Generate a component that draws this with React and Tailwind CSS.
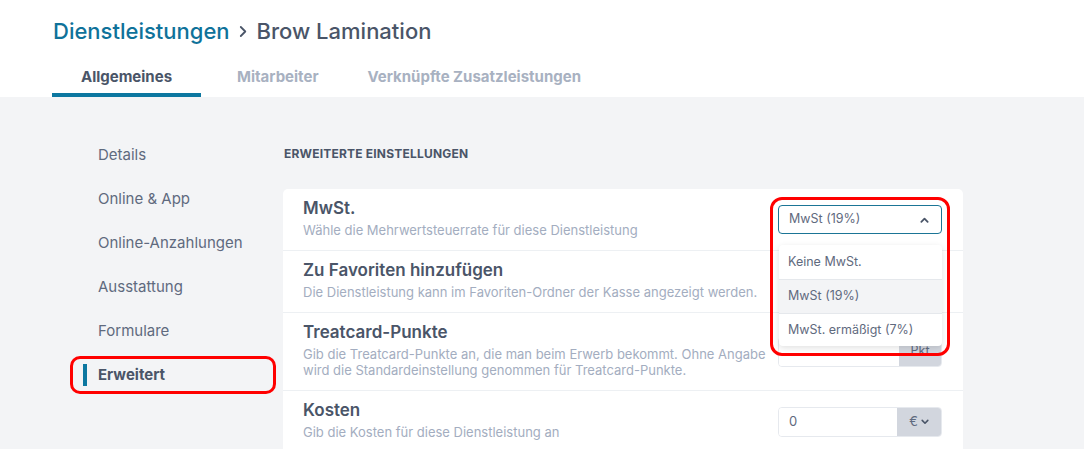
import React from "react";

const navItems = ["Details", "Online & App", "Online-Anzahlungen", "Ausstattung", "Formulare"];

function ChevronUp({ className }) {
  return (
    <svg viewBox="0 0 10 6" className={className} fill="none" stroke="currentColor" strokeWidth="2" strokeLinecap="round" strokeLinejoin="round">
      <polyline points="1.5,5 5,1.5 8.5,5" />
    </svg>
  );
}
function ChevronDown({ className }) {
  return (
    <svg viewBox="0 0 10 6" className={className} fill="none" stroke="currentColor" strokeWidth="2" strokeLinecap="round" strokeLinejoin="round">
      <polyline points="1.5,1 5,4.5 8.5,1" />
    </svg>
  );
}

function Row({ title, desc, children, border = true }) {
  return (
    <div className={`flex items-center justify-between pl-[20px] pr-[21px] ${border ? "border-t border-[#edf0f3]" : ""}`}>
      <div className="pt-[9px] pb-[12px] w-[470px] whitespace-nowrap">
        <div className="text-[17px] leading-[20px] font-semibold text-[#4a5568]">{title}</div>
        <div className="mt-[4px] text-[13px] leading-[16px] text-[#a3adc0]">{desc}</div>
      </div>
      {children}
    </div>
  );
}

export default function App() {
  return (
    <div className="w-[1084px] h-[449px] overflow-hidden bg-[#f3f4f6] font-['Inter',sans-serif]">
      <header className="bg-white h-[97px] pl-[53px] pt-[18px]">
        <h1 className="text-[22px] leading-[26px] font-medium flex items-center">
          <span className="text-[#0f729a]">Dienstleistungen</span>
          <svg viewBox="0 0 10 14" className="w-[9px] h-[13px] mx-[9px] text-[#4a5568]" fill="none" stroke="currentColor" strokeWidth="2" strokeLinecap="round" strokeLinejoin="round">
            <polyline points="2,2 7,7 2,12" />
          </svg>
          <span className="text-[#4a5568]">Brow Lamination</span>
        </h1>
        <nav className="flex mt-[13px] -ml-[1px] text-[15px] font-bold">
          <div className="w-[149px] h-[40px] pt-[4px] flex items-center justify-center text-[#4a5568] border-b-[4px] border-[#0c77a0]">Allgemeines</div>
          <div className="ml-[36px] h-[40px] pt-[4px] pb-[4px] flex items-center text-[#a8b1c1]">Mitarbeiter</div>
          <div className="ml-[49px] h-[40px] pt-[4px] pb-[4px] flex items-center text-[#a8b1c1]">Verknüpfte Zusatzleistungen</div>
        </nav>
      </header>
      <div className="flex">
        <aside className="w-[283px] shrink-0 pl-[70px] pt-[36px]">
          {navItems.map((n) => (
            <div key={n} className="h-[44px] flex items-center pl-[28px] text-[15px] text-[#5f6a7e] whitespace-nowrap">{n}</div>
          ))}
          <div className="h-[44px] py-[3px]">
            <div className="relative h-[38px] w-[206px] border-[3px] border-[#ff0000] rounded-[10px] flex items-center pl-[25px] text-[15px] font-bold text-[#4a5568]">
              <span className="absolute left-[10px] top-[5px] w-[4px] h-[22px] bg-[#0c77a0]" />
              Erweitert
            </div>
          </div>
        </aside>
        <main className="w-[680px] shrink-0 pt-[49px]">
          <div className="pl-[1px] text-[12px] leading-[16px] font-bold tracking-[0.2px] text-[#4a5568]">ERWEITERTE EINSTELLUNGEN</div>
          <div className="mt-[27px] bg-white rounded-t-[5px] h-[300px]">
            <Row title="MwSt." desc="Wähle die Mehrwertsteuerrate für diese Dienstleistung" border={false}>
              <div className="relative">
                <div className="w-[164px] h-[29px] border border-[#1b7596] rounded-[4px] flex items-center justify-between pl-[10px] pr-[12px] text-[12.5px] text-[#5f6a7e]">
                  <span>MwSt (19%)</span>
                  <ChevronUp className="w-[9px] h-[6px] text-[#4a5568]" />
                </div>
                <div className="absolute left-[-8px] top-[-8px] w-[180px] h-[159px] border-[3px] border-[#ff0000] rounded-[12px] z-20 pointer-events-none" />
                <div className="absolute left-[1px] top-[40px] w-[163px] bg-white rounded-[4px] shadow-[0_2px_6px_rgba(0,0,0,0.12)] z-10 text-[12.5px] text-[#5f6a7e] overflow-hidden">
                  <div className="h-[34px] flex items-center pl-[9px]">Keine MwSt.</div>
                  <div className="h-[35px] flex items-center pl-[9px] bg-[#f3f4f6] border-y border-[#e5e8ec]">MwSt (19%)</div>
                  <div className="h-[32px] flex items-center pl-[9px]">MwSt. ermäßigt (7%)</div>
                </div>
              </div>
            </Row>
            <Row title="Zu Favoriten hinzufügen" desc="Die Dienstleistung kann im Favoriten-Ordner der Kasse angezeigt werden.">
              <div className="w-[164px]" />
            </Row>
            <Row title="Treatcard-Punkte" desc={<>Gib die Treatcard-Punkte an, die man beim Erwerb bekommt. Ohne Angabe<br />wird die Standardeinstellung genommen für Treatcard-Punkte.</>}>
              <div className="w-[164px] h-[30px] flex border border-[#e6e9ee] rounded-[4px] overflow-hidden text-[12.5px]">
                <div className="flex-1 bg-white" />
                <div className="w-[42px] bg-[#d2d6de] flex items-center justify-center text-[#5f6a7e]">Pkt</div>
              </div>
            </Row>
            <Row title="Kosten" desc="Gib die Kosten für diese Dienstleistung an">
              <div className="w-[164px] h-[30px] flex border border-[#e6e9ee] rounded-[4px] overflow-hidden text-[13px]">
                <div className="flex-1 bg-white flex items-center pl-[10px] text-[#5f6a7e]">0</div>
                <div className="w-[44px] bg-[#d2d6de] flex items-center justify-center gap-[3px] text-[#5f6a7e]">
                  <span>€</span>
                  <ChevronDown className="w-[8px] h-[6px] text-[#4a5568]" />
                </div>
              </div>
            </Row>
          </div>
        </main>
      </div>
    </div>
  );
}
